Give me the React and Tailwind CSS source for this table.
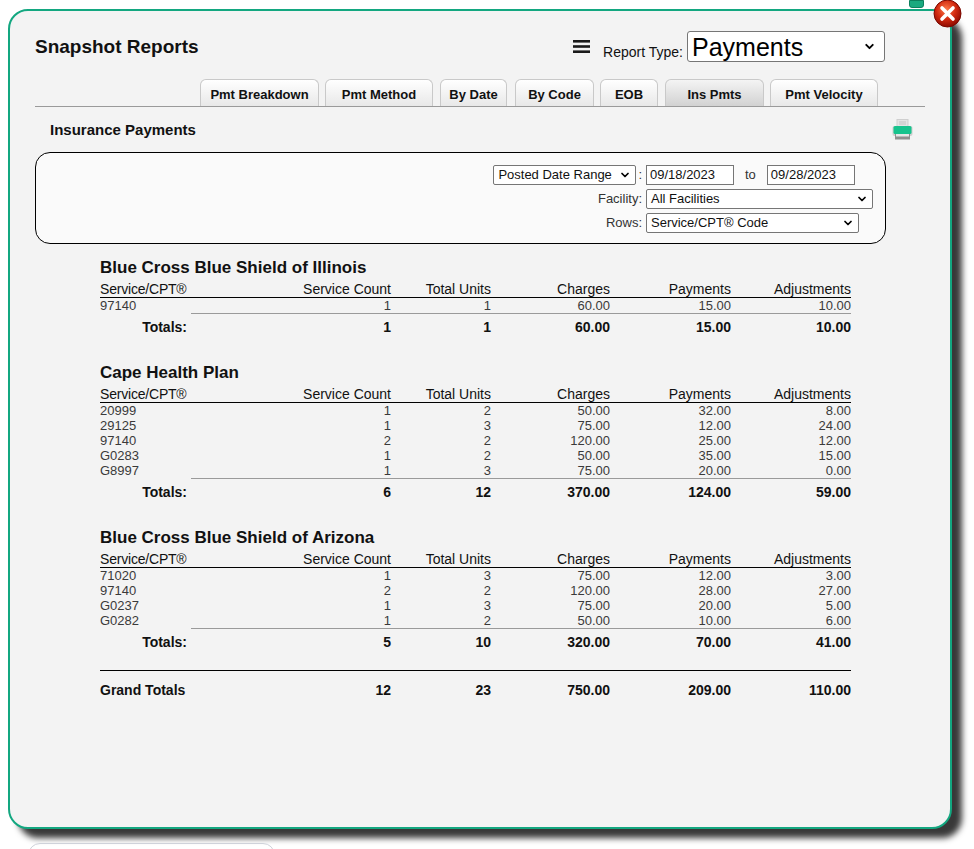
import React from 'react';
import { ChevronDown } from 'lucide-react';

const tabs = [
  { label: 'Pmt Breakdown', cls: 'w-[119px]' },
  { label: 'Pmt Method', cls: 'w-[108px] ml-[6px]' },
  { label: 'By Date', cls: 'w-[67px] ml-[7px]' },
  { label: 'By Code', cls: 'w-[79px] ml-[8px]' },
  { label: 'EOB', cls: 'w-[58px] ml-[6px]' },
  { label: 'Ins Pmts', cls: 'w-[99px] ml-[7px]', active: true },
  { label: 'Pmt Velocity', cls: 'w-[108px] ml-[6px]' },
];

const payers = [
  {
    name: 'Blue Cross Blue Shield of Illinois',
    rows: [['97140', '1', '1', '60.00', '15.00', '10.00']],
    totals: ['1', '1', '60.00', '15.00', '10.00'],
  },
  {
    name: 'Cape Health Plan',
    rows: [
      ['20999', '1', '2', '50.00', '32.00', '8.00'],
      ['29125', '1', '3', '75.00', '12.00', '24.00'],
      ['97140', '2', '2', '120.00', '25.00', '12.00'],
      ['G0283', '1', '2', '50.00', '35.00', '15.00'],
      ['G8997', '1', '3', '75.00', '20.00', '0.00'],
    ],
    totals: ['6', '12', '370.00', '124.00', '59.00'],
  },
  {
    name: 'Blue Cross Blue Shield of Arizona',
    rows: [
      ['71020', '1', '3', '75.00', '12.00', '3.00'],
      ['97140', '2', '2', '120.00', '28.00', '27.00'],
      ['G0237', '1', '3', '75.00', '20.00', '5.00'],
      ['G0282', '1', '2', '50.00', '10.00', '6.00'],
    ],
    totals: ['5', '10', '320.00', '70.00', '41.00'],
  },
];

const headers = ['Service Count', 'Total Units', 'Charges', 'Payments', 'Adjustments'];
const cols = 'grid grid-cols-[91px_200px_100px_119px_121px_120px]';

const Select = ({ width, text }) => (
  <div className={`${width} h-[20px] border border-[#767676] rounded-[2px] bg-white flex items-center justify-between pl-[4px] pr-[4px] text-[13px] text-[#111]`}>
    <span className="whitespace-nowrap">{text}</span>
    <ChevronDown size={12} strokeWidth={3.5} className="text-black" />
  </div>
);

const DateInput = ({ value }) => (
  <div className="w-[88px] h-[20px] border border-[#767676] bg-white flex items-center pl-[3px] text-[13px] text-[#111]">
    {value}
  </div>
);

const PrinterIcon = () => (
  <svg width="21" height="21" viewBox="0 0 21 21">
    <rect x="5" y="0.5" width="11" height="7" fill="#e4e4e4" stroke="#cfcfcf" />
    <line x1="7" y1="3" x2="14" y2="3" stroke="#c4c4c4" />
    <line x1="7" y1="5" x2="14" y2="5" stroke="#c4c4c4" />
    <rect x="0.5" y="7" width="20" height="10" rx="2" fill="#cfcfcf" />
    <rect x="1.5" y="7" width="18" height="8" rx="1.5" fill="#17c38d" />
    <rect x="3" y="15" width="15" height="5.5" fill="#8f8f8f" />
    <rect x="4" y="15" width="13" height="2.5" fill="#e6e6e6" />
  </svg>
);

const CloseIcon = () => (
  <svg width="29" height="29" viewBox="0 0 29 29">
    <defs>
      <radialGradient id="cg" cx="45%" cy="35%" r="65%">
        <stop offset="0%" stopColor="#ff7a4a" />
        <stop offset="55%" stopColor="#d22a10" />
        <stop offset="100%" stopColor="#8e0a00" />
      </radialGradient>
    </defs>
    <circle cx="14.5" cy="14.5" r="13.5" fill="url(#cg)" stroke="#7a0800" strokeWidth="1" />
    <path d="M9 9 L20 20 M20 9 L9 20" stroke="#fff" strokeWidth="3.6" strokeLinecap="round" />
  </svg>
);

const Section = ({ payer }) => (
  <div className="mb-[24px]">
    <div className="text-[17px] font-bold leading-[20px] text-[#111] whitespace-nowrap">{payer.name}</div>
    <div className={`${cols} mt-[3px] h-[17px] leading-[16px] text-[14px] text-[#111] border-b border-black`}>
      <div className="whitespace-nowrap tracking-[-0.2px]">Service/CPT®</div>
      {headers.map((h) => (
        <div key={h} className="text-right whitespace-nowrap">{h}</div>
      ))}
    </div>
    {payer.rows.map((row, i) => (
      <div key={i} className={`${cols} h-[15px] leading-[15px] text-[13px] text-[#3a3a3a]`}>
        {row.map((cell, j) => (
          <div key={j} className={j === 0 ? '' : 'text-right'}>{cell}</div>
        ))}
      </div>
    ))}
    <div className="ml-[91px] h-px bg-[#9a9a9a]" />
    <div className={`${cols} h-[25px] items-center pt-[1px] text-[14px] font-bold text-[#111]`}>
      <div className="text-right pr-[4px]">Totals:</div>
      {payer.totals.map((t, j) => (
        <div key={j} className="text-right">{t}</div>
      ))}
    </div>
  </div>
);

const App = () => {
  return (
    <div className="relative h-[849px] w-[974px] overflow-hidden bg-white font-['Liberation_Sans',Arial,sans-serif]">
      {/* page behind the overlay */}
      <div className="absolute left-[909px] top-0 w-[15px] h-[8px] rounded-b-[3px] bg-[#1aa97f] border border-[#0d7f5d]" />
      <div className="absolute left-[28px] top-[843px] w-[247px] h-[30px] rounded-[12px] border border-[#cfd2da]" />

      <div className="ml-[8px] mt-[9px] w-[944px] h-[820px] rounded-[20px] border-2 border-[#13a780] bg-[#f3f3f3] shadow-[10px_9px_6px_rgba(0,0,0,0.78)] px-[25px] pt-[20px]">
        {/* header */}
        <div className="flex items-center justify-between h-[31px] pr-[40px]">
          <div className="text-[19px] font-bold text-[#111] pt-[1px]">Snapshot Reports</div>
          <div className="flex items-center">
            <svg width="17" height="13" viewBox="0 0 17 13" className="mr-[13px]">
              <rect x="0" y="0" width="17" height="2.6" fill="#1a1a1a" />
              <rect x="0" y="5.2" width="17" height="2.6" fill="#1a1a1a" />
              <rect x="0" y="10.4" width="17" height="2.6" fill="#1a1a1a" />
            </svg>
            <span className="mt-[11px] mr-[4px] text-[14px] text-[#111]">Report Type:</span>
            <div className="w-[198px] h-[31px] border border-[#767676] rounded-[3px] bg-white flex items-center justify-between pl-[4px] pr-[8px]">
              <span className="text-[25px] leading-none text-black pt-[1px]">Payments</span>
              <ChevronDown size={13} strokeWidth={3.5} className="text-black" />
            </div>
          </div>
        </div>

        {/* tabs */}
        <div className="mt-[17px] flex items-end border-b border-[#9a9a9a] pl-[165px]">
          {tabs.map((t) => (
            <div
              key={t.label}
              className={`${t.cls} h-[27px] flex items-center justify-center pt-[3px] rounded-t-[6px] border border-b-0 border-[#c9c9c9] text-[13px] font-bold text-[#111] whitespace-nowrap ${
                t.active ? 'bg-gradient-to-b from-[#f4f4f4] to-[#d2d2d2]' : 'bg-gradient-to-b from-white to-[#e8e8e8]'
              }`}
            >
              {t.label}
            </div>
          ))}
        </div>

        {/* sub header */}
        <div className="mt-[12px] h-[21px] flex items-center justify-between pl-[15px] pr-[12px]">
          <div className="text-[15px] font-bold text-[#111] pt-[2px]">Insurance Payments</div>
          <PrinterIcon />
        </div>

        {/* filters */}
        <div className="mt-[12px] w-[851px] h-[92px] rounded-[15px] border border-black bg-[#fafafa] flex justify-end pt-[12px] pr-[12px] text-[13px] text-[#333]">
          <div className="grid grid-cols-[auto_227px] gap-x-[4px] gap-y-[4px] content-start">
            <div className="flex items-center justify-end h-[20px]">
              <Select width="w-[143px]" text="Posted Date Range" />
              <span className="ml-[2px]">:</span>
            </div>
            <div className="flex items-center h-[20px]">
              <DateInput value="09/18/2023" />
              <span className="mx-[11px]">to</span>
              <DateInput value="09/28/2023" />
            </div>
            <div className="text-right leading-[20px]">Facility:</div>
            <Select width="w-[227px]" text="All Facilities" />
            <div className="text-right leading-[20px]">Rows:</div>
            <Select width="w-[213px]" text="Service/CPT® Code" />
          </div>
        </div>

        {/* report */}
        <div className="mt-[14px] pl-[65px]">
          <div className="w-[751px]">
            {payers.map((p) => (
              <Section key={p.name} payer={p} />
            ))}
            <div className="-mt-[8px] h-px bg-black" />
            <div className={`${cols} pt-[11px] leading-[17px] text-[14px] font-bold text-[#111]`}>
              <div className="whitespace-nowrap">Grand Totals</div>
              {['12', '23', '750.00', '209.00', '110.00'].map((v) => (
                <div key={v} className="text-right">{v}</div>
              ))}
            </div>
          </div>
        </div>
      </div>

      <div className="absolute left-[933px] top-[-1px]">
        <CloseIcon />
      </div>
    </div>
  );
};

export default App;
